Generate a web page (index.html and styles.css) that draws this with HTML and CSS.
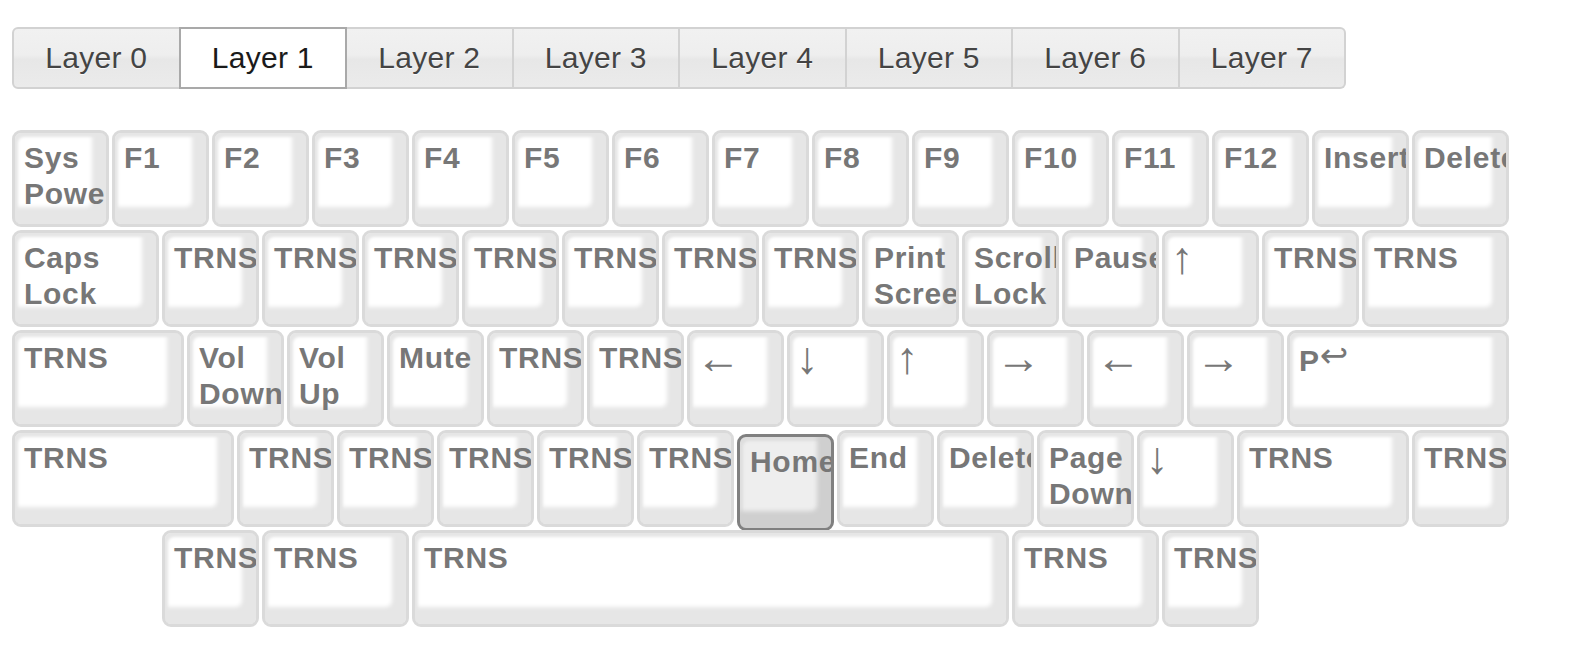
FILE: index.html
```html
<!DOCTYPE html>
<html>
<head>
<meta charset="utf-8">
<link rel="stylesheet" href="styles.css">
</head>
<body>
<div class="tabs">
  <div class="tab">Layer 0</div>
  <div class="tab active">Layer 1</div>
  <div class="tab">Layer 2</div>
  <div class="tab">Layer 3</div>
  <div class="tab">Layer 4</div>
  <div class="tab">Layer 5</div>
  <div class="tab">Layer 6</div>
  <div class="tab">Layer 7</div>
</div>
<div class="keyboard">
  <div class="row">
    <div class="key u1">Sys Power</div>
    <div class="key u1">F1</div>
    <div class="key u1">F2</div>
    <div class="key u1">F3</div>
    <div class="key u1">F4</div>
    <div class="key u1">F5</div>
    <div class="key u1">F6</div>
    <div class="key u1">F7</div>
    <div class="key u1">F8</div>
    <div class="key u1">F9</div>
    <div class="key u1">F10</div>
    <div class="key u1">F11</div>
    <div class="key u1">F12</div>
    <div class="key u1">Insert</div>
    <div class="key u1">Delete</div>
  </div>
  <div class="row">
    <div class="key u15">Caps Lock</div>
    <div class="key u1">TRNS</div>
    <div class="key u1">TRNS</div>
    <div class="key u1">TRNS</div>
    <div class="key u1">TRNS</div>
    <div class="key u1">TRNS</div>
    <div class="key u1">TRNS</div>
    <div class="key u1">TRNS</div>
    <div class="key u1">Print Screen</div>
    <div class="key u1">Scroll Lock</div>
    <div class="key u1">Pause</div>
    <div class="key u1 arrow">↑</div>
    <div class="key u1">TRNS</div>
    <div class="key u15">TRNS</div>
  </div>
  <div class="row">
    <div class="key u175">TRNS</div>
    <div class="key u1">Vol Down</div>
    <div class="key u1">Vol Up</div>
    <div class="key u1">Mute</div>
    <div class="key u1">TRNS</div>
    <div class="key u1">TRNS</div>
    <div class="key u1 arrow">←</div>
    <div class="key u1 arrow">↓</div>
    <div class="key u1 arrow">↑</div>
    <div class="key u1 arrow">→</div>
    <div class="key u1 arrow">←</div>
    <div class="key u1 arrow">→</div>
    <div class="key u225">P<span class="thin">↩</span></div>
  </div>
  <div class="row">
    <div class="key u225">TRNS</div>
    <div class="key u1">TRNS</div>
    <div class="key u1">TRNS</div>
    <div class="key u1">TRNS</div>
    <div class="key u1">TRNS</div>
    <div class="key u1">TRNS</div>
    <div class="key u1 pressed">Home</div>
    <div class="key u1">End</div>
    <div class="key u1">Delete</div>
    <div class="key u1">Page Down</div>
    <div class="key u1 arrow">↓</div>
    <div class="key u175">TRNS</div>
    <div class="key u1">TRNS</div>
  </div>
  <div class="row indent15">
    <div class="key u1">TRNS</div>
    <div class="key u15">TRNS</div>
    <div class="key u6">TRNS</div>
    <div class="key u15">TRNS</div>
    <div class="key u1">TRNS</div>
  </div>
</div>
</body>
</html>
```
FILE: styles.css
```css
html, body {
  margin: 0;
  padding: 0;
  background: #fff;
}
body {
  padding: 27px 12px;
  font-family: "Liberation Sans", Arial, Helvetica, sans-serif;
}
.tabs {
  display: flex;
  width: 1334px;
  height: 62px;
}
.tab {
  flex: 1 1 0;
  box-sizing: border-box;
  height: 62px;
  border: 2px solid #d2d2d2;
  border-left-width: 0;
  background: linear-gradient(to bottom, #f1f1f1 0%, #eeeeee 45%, #e7e7e7 52%, #ebebeb 100%);
  color: #444;
  font-size: 30px;
  letter-spacing: 0.3px;
  line-height: 58px;
  text-align: center;
  text-shadow: 0 1px 0 #fafafa;
}
.tab:first-child {
  border-left-width: 2px;
  border-radius: 6px 0 0 6px;
}
.tab:last-child {
  border-radius: 0 6px 6px 0;
}
.tab.active {
  background: #fff;
  border: 2px solid #a9a9a9;
  color: #1a1a1a;
  margin-left: -2px;
}
.keyboard {
  margin-top: 41px;
  display: flex;
  flex-direction: column;
  gap: 3px;
}
.row {
  display: flex;
  gap: 3px;
  align-items: flex-start;
}
.indent15 {
  margin-left: 150px;
}
.key {
  box-sizing: border-box;
  height: 97px;
  border: 3px solid #dadada;
  border-radius: 9px;
  background: #fff;
  box-shadow: inset -14px -17px 4px #e6e6e6, inset 3px 4px 3px #e6e6e6;
  padding: 7px 0 0 9px;
  overflow: hidden;
  color: #777;
  font-weight: bold;
  font-size: 30px;
  letter-spacing: 0.7px;
  line-height: 36px;
}
.u1 { width: 97px; }
.u15 { width: 147px; }
.u175 { width: 172px; }
.u225 { width: 222px; }
.u6 { width: 597px; }
.arrow {
  font-weight: normal;
  font-family: "Liberation Sans", Arial, sans-serif;
  font-size: 45px;
  line-height: 45px;
  padding-top: 2px;
  padding-left: 6px;
  letter-spacing: 0;
}
.thin {
  font-weight: normal;
  font-family: "DejaVu Sans", sans-serif;
  font-size: 34px;
  line-height: 30px;
  vertical-align: 4px;
}
.pressed {
  margin-top: 4px;
  margin-bottom: -4px;
  border-color: #808080;
  background: #eeeeee;
  box-shadow: inset -14px -17px 4px #cfcfcf, inset 3px 4px 3px #dedede;
  padding-left: 10px;
}
```
